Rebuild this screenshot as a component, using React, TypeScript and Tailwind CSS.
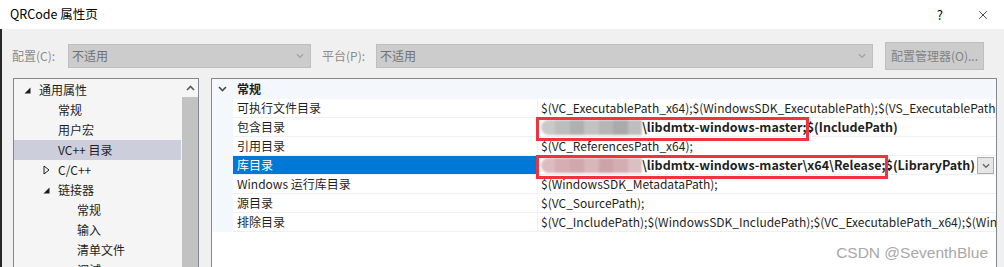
import { X } from 'lucide-react'

const font = 'font-["Noto_Sans_CJK_SC","Noto_Sans",sans-serif]'

type TreeItem = { label: string; level: 1 | 2 | 3; icon?: 'open' | 'closed'; selected?: boolean }

const tree: TreeItem[] = [
  { label: '通用属性', level: 1, icon: 'open' },
  { label: '常规', level: 2 },
  { label: '用户宏', level: 2 },
  { label: 'VC++ 目录', level: 2, selected: true },
  { label: 'C/C++', level: 2, icon: 'closed' },
  { label: '链接器', level: 2, icon: 'open' },
  { label: '常规', level: 3 },
  { label: '输入', level: 3 },
  { label: '清单文件', level: 3 },
  { label: '调试', level: 3 },
]

const indent = { 1: 'pl-[25px]', 2: 'pl-[44px]', 3: 'pl-[63px]' }
const iconIndent = { 1: 'left-[10px]', 2: 'left-[29px]', 3: 'left-[48px]' }

const Triangle = ({ open }: { open: boolean }) =>
  open ? (
    <svg width="7" height="7" viewBox="0 0 7 7">
      <path d="M6.5 0.5 L6.5 6.5 L0.5 6.5 Z" fill="#1e1e1e" />
    </svg>
  ) : (
    <svg width="7" height="10" viewBox="0 0 7 10">
      <path d="M1 1 L6 5 L1 9 Z" fill="none" stroke="#1e1e1e" strokeWidth="1" />
    </svg>
  )

const Chevron = ({ up = false, color = '#5a5a5a', w = 9 }: { up?: boolean; color?: string; w?: number }) => (
  <svg width={w} height="6" viewBox="0 0 9 6">
    <path d={up ? 'M1 5 L4.5 1.5 L8 5' : 'M1 1 L4.5 4.5 L8 1'} fill="none" stroke={color} strokeWidth="1.6" />
  </svg>
)

// blurred (pixelated) patch that hides a personal path
const Smudge = ({ tint }: { tint: 'gray' | 'pink' }) => {
  const gray = ['bg-[#c9c9c9]', 'bg-[#bdbdbd]', 'bg-[#b0b0b0]', 'bg-[#c2c2c2]', 'bg-[#b6b6b6]', 'bg-[#aaaaaa]', 'bg-[#bebebe]']
  const pink = ['bg-[#dcbcc0]', 'bg-[#d4aeb3]', 'bg-[#cfa7ad]', 'bg-[#d8b6ba]', 'bg-[#cda3a9]', 'bg-[#d2adb2]', 'bg-[#dcbfc2]']
  const cells = tint === 'gray' ? gray : pink
  return (
    <span className="inline-flex shrink-0 w-[101px] h-[15px] overflow-hidden rounded-l-full rounded-r-[40%] blur-[1px] align-middle">
      {cells.map((c, i) => (
        <span key={i} className={`flex-1 ${c}`} />
      ))}
    </span>
  )
}

type Prop = { name: string; value: React.ReactNode; selected?: boolean }

const props: Prop[] = [
  { name: '可执行文件目录', value: '$(VC_ExecutablePath_x64);$(WindowsSDK_ExecutablePath);$(VS_ExecutablePath);$(MSBuild_ExecutablePath);$(FxCopDir);$(PATH);' },
  {
    name: '包含目录',
    value: (
      <>
        <Smudge tint="gray" />
        <span className="font-bold text-[12.5px]">\libdmtx-windows-master;$(IncludePath)</span>
        <span className="absolute left-[-2px] top-[-1px] w-[273px] h-[24px] border-[3px] border-[#f0333c]" />
      </>
    ),
  },
  { name: '引用目录', value: '$(VC_ReferencesPath_x64);' },
  {
    name: '库目录',
    selected: true,
    value: (
      <>
        <Smudge tint="pink" />
        <span className="font-bold text-[12.5px]">\libdmtx-windows-master\x64\Release;$(LibraryPath)</span>
        <span className="absolute left-[-2px] top-[-1px] w-[352px] h-[24px] border-[3px] border-[#f0333c]" />
        <span className="absolute left-[439px] top-[1px] w-[17px] h-[17px] bg-[#e6e6e6] border border-[#adadad] flex items-center justify-center">
          <Chevron color="#6a6a6a" w={8} />
        </span>
      </>
    ),
  },
  { name: 'Windows 运行库目录', value: '$(WindowsSDK_MetadataPath);' },
  { name: '源目录', value: '$(VC_SourcePath);' },
  { name: '排除目录', value: '$(VC_IncludePath);$(WindowsSDK_IncludePath);$(VC_ExecutablePath_x64);$(WindowsSDK_ExecutablePath);' },
]

export default function App() {
  return (
    <div className={`w-[1004px] h-[267px] overflow-hidden bg-[#f0f0f0] text-[12px] text-[#1e1e1e] ${font}`}>
      {/* Title bar */}
      <div className="h-[29px] bg-white flex items-center pl-[10px] pr-[14px]">
        <span className="text-[12.5px] text-black">QRCode 属性页</span>
        <span className="ml-auto text-[13px] text-black mr-[33px]">?</span>
        <X size={14} strokeWidth={1.2} className="text-black" />
      </div>

      <div className="h-[238px] border-l-2 border-[#262626] relative">
        {/* Toolbar */}
        <div className="flex items-center pl-[10px] pt-[13px] h-[41px] text-[#8c8c8c]">
          <span className="w-[56px]">配置(C):</span>
          <div className="w-[243px] h-[24px] bg-[#cccccc] border border-[#bfbfbf] flex items-center pl-[3px] pr-[6px] text-[#707070]">
            不适用
            <span className="ml-auto">
              <Chevron color="#a6a6a6" w={8} />
            </span>
          </div>
          <span className="ml-[11px] w-[54px]">平台(P):</span>
          <div className="w-[497px] h-[24px] bg-[#cccccc] border border-[#bfbfbf] flex items-center pl-[3px] pr-[6px] text-[#707070]">
            不适用
            <span className="ml-auto">
              <Chevron color="#a6a6a6" w={8} />
            </span>
          </div>
          <div className="ml-[12px] w-[99px] h-[28px] bg-[#cccccc] border border-[#bfbfbf] flex items-center justify-center text-[#838383]">
            配置管理器(O)...
          </div>
        </div>

        {/* Panels */}
        <div className="flex pl-[11px] pt-[8px] gap-[12px]">
          {/* Tree */}
          <div className="w-[186px] shrink-0 h-[200px] border border-[#828790] bg-[#f5f5f5] flex">
            <div className="flex-1 pt-[1px] pr-[1px]">
              {tree.map((t, i) => (
                <div
                  key={i}
                  className={`relative h-[20px] flex items-center ${indent[t.level]} ${t.selected ? 'bg-[#cccedb]' : ''}`}
                >
                  {t.icon && (
                    <span className={`absolute ${iconIndent[t.level]} top-0 h-full flex items-center`}>
                      <Triangle open={t.icon === 'open'} />
                    </span>
                  )}
                  {t.label}
                </div>
              ))}
            </div>
            <div className="w-[16px] flex flex-col">
              <div className="h-[18px] flex items-center justify-center">
                <Chevron up color="#5a5a5a" w={9} />
              </div>
              <div className="flex-1 bg-[#c2c2c2]" />
            </div>
          </div>

          {/* Property grid */}
          <div className="w-[786px] shrink-0 h-[200px] border border-[#828790] bg-white overflow-hidden">
            <div className="flex">
              <div className="w-[21px] shrink-0 bg-[#f4f7fb]">
                <div className="h-[20px] flex items-center justify-center">
                  <Chevron color="#4a4a4a" w={9} />
                </div>
                <div className="h-[133px]" />
              </div>
              <div className="flex-1 min-w-0 overflow-hidden">
                <div className="h-[20px] bg-[#f4f7fb] flex items-center pl-[4px] font-bold">常规</div>
                {props.map((p, i) => (
                  <div key={i} className="h-[19px] flex border-b border-[#f0f0f0]">
                    <div
                      className={`w-[305px] shrink-0 flex items-center pl-[4px] border-r border-[#f0f0f0] ${p.selected ? 'bg-[#0078d7] text-white' : ''}`}
                    >
                      {p.name}
                    </div>
                    <div className="relative flex-1 min-w-0 flex items-center pl-[3px] whitespace-nowrap">
                      {p.value}
                    </div>
                  </div>
                ))}
              </div>
            </div>
            <div className="flex justify-end pr-[8px] pt-[9px]">
              <span className='font-["Liberation_Sans",Arial,sans-serif] text-[15.5px] text-[#a8a8a8]'>CSDN @SeventhBlue</span>
            </div>
          </div>
        </div>
      </div>
    </div>
  )
}
